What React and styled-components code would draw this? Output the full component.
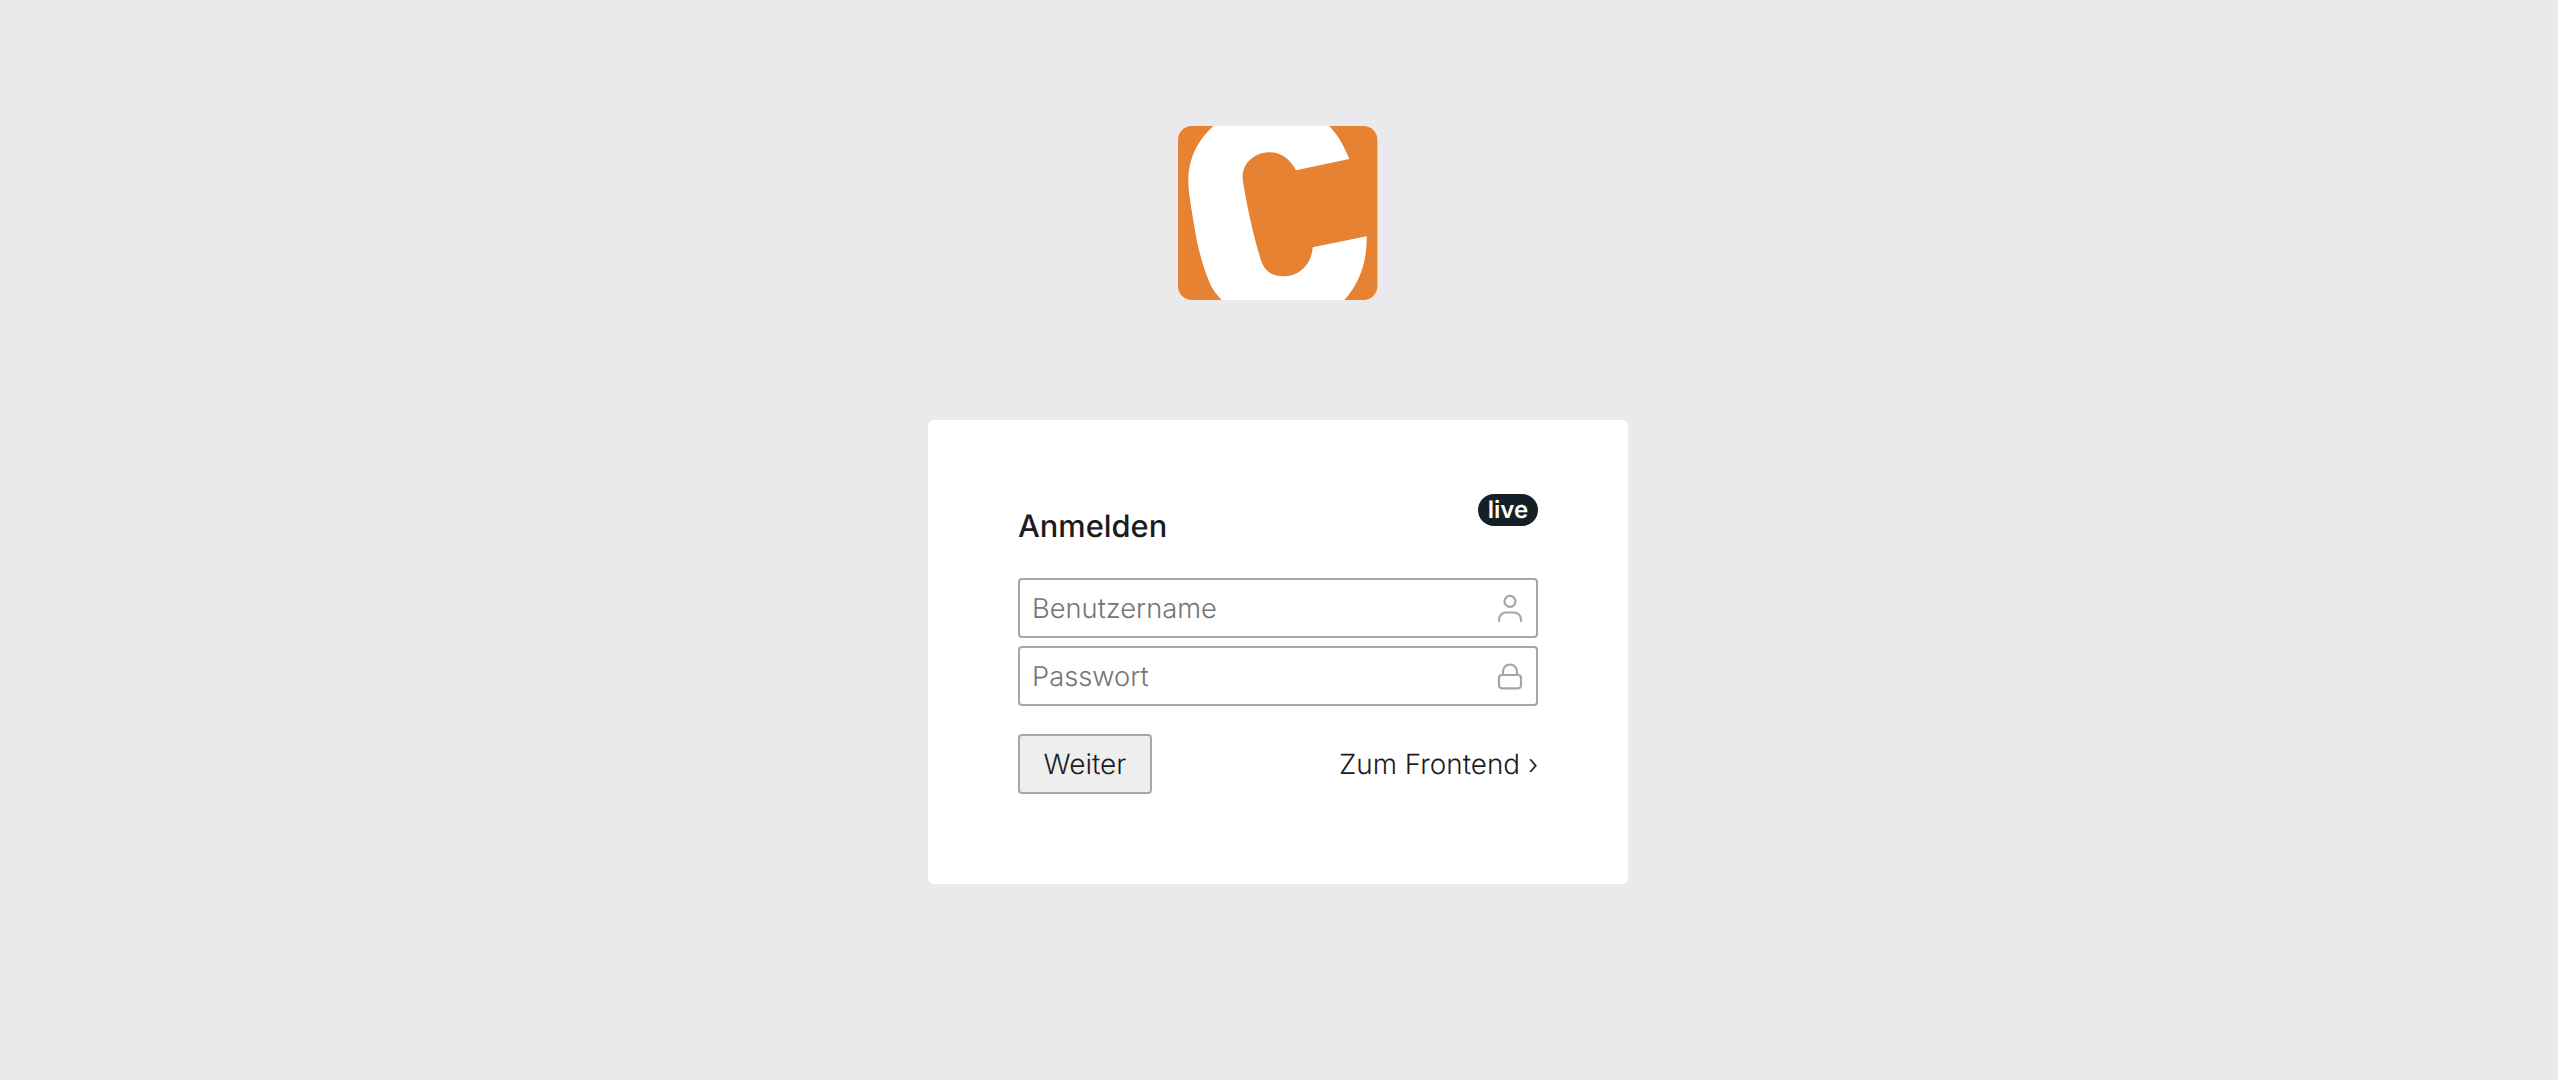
import React from 'react';
import styled, { createGlobalStyle } from 'styled-components';

const Global = createGlobalStyle`
  html, body { margin: 0; padding: 0; background: #eaeaec; }
  body {
    font-family: Inter, "Liberation Sans", sans-serif;
    color: #1c1c1c;
    text-rendering: geometricPrecision;
  }
`;

const Page = styled.main`
  min-height: 1080px;
  box-sizing: border-box;
  padding: 126px 2px 0 0;
  display: flex;
  flex-direction: column;
  align-items: center;
  gap: 120px;
  will-change: opacity;
`;

const LogoMark = styled.svg`
  display: block;
  width: 200px;
  height: 174px;
`;

const Card = styled.form`
  position: relative;
  box-sizing: border-box;
  width: 700px;
  height: 464px;
  padding: 90px;
  background: #fff;
  border-radius: 6px;
`;

const Heading = styled.h1`
  margin: -1px 0 0;
  height: 69px;
  font-size: 30.8px;
  line-height: 36px;
  font-weight: 500;
  color: #1c1c1c;
`;

const Badge = styled.span`
  position: absolute;
  top: 74px;
  right: 90px;
  width: 60px;
  height: 32px;
  border-radius: 16px;
  background: #141f27;
  color: #fff;
  font-size: 24px;
  line-height: 32px;
  font-weight: 600;
  text-align: center;
`;

const Fields = styled.div`
  display: flex;
  flex-direction: column;
  gap: 8px;
`;

const Field = styled.label`
  box-sizing: border-box;
  height: 60px;
  display: flex;
  align-items: center;
  padding: 0 12px;
  border: 2px solid #a6a6a6;
  border-radius: 4px;
  background: #fff;
`;

const Input = styled.input`
  flex: 1;
  min-width: 0;
  border: 0;
  outline: 0;
  padding: 0;
  background: transparent;
  font: 300 27.3px Inter, "Liberation Sans", sans-serif;
  text-rendering: geometricPrecision;
  color: #1c1c1c;
  &::placeholder { color: #757575; opacity: 1; }
`;

const FieldIcon = styled.svg`
  flex: none;
  width: 28px;
  height: 32px;
  fill: none;
  stroke: #a6a6a6;
  stroke-width: 2.2;
  stroke-linecap: round;
`;

const Actions = styled.div`
  margin-top: 28px;
  display: flex;
  align-items: center;
  justify-content: space-between;
`;

const Button = styled.button`
  box-sizing: border-box;
  width: 134px;
  height: 60px;
  padding: 0;
  border: 2px solid #a6a6a6;
  border-radius: 4px;
  background: #eee;
  color: #1c1c1c;
  font: 300 28px Inter, "Liberation Sans", sans-serif;
  text-rendering: geometricPrecision;
`;

const FrontendLink = styled.a`
  color: #1c1c1c;
  font-size: 27.85px;
  font-weight: 300;
  text-decoration: none;
`;

export default function App() {
  return (
    <>
      <Global />
      <Page>
        <LogoMark viewBox="0 0 200 174" aria-label="Contao">
          <rect width="199.4" height="174" rx="14" fill="#e68232" />
          <path
            fill="#fff"
            d="M35.3 0C20 14 10.3 32 10.3 54C10.3 68 15 92 18.7 114C22 130 27 146 32 157.7C35 164 39 169 43.7 174H166.3C181 158 189 137 188.7 110.3L134.7 121.3C133.5 138 122 150.3 105.3 150.3C94 150.3 86 145 82.5 133C75 108 68 76 64.8 54C63 38 76 26.3 92 26.3C103 26.3 112 33 118 44.3L171.3 33C166 20 160 9 151.3 0Z"
          />
        </LogoMark>
        <Card>
          <Heading>Anmelden</Heading>
          <Badge>live</Badge>
          <Fields>
            <Field>
              <Input placeholder="Benutzername" />
              <FieldIcon viewBox="0 0 28 32">
                <circle cx="14" cy="9.3" r="5.5" />
                <path d="M3 29v-1.5a7 7 0 0 1 7-7h8a7 7 0 0 1 7 7V29" />
              </FieldIcon>
            </Field>
            <Field>
              <Input placeholder="Passwort" type="password" />
              <FieldIcon viewBox="0 0 28 32">
                <rect x="3" y="15" width="22" height="13.3" rx="3" />
                <path d="M7 15v-3.5a7 7 0 0 1 14 0V15" />
              </FieldIcon>
            </Field>
          </Fields>
          <Actions>
            <Button type="button">Weiter</Button>
            <FrontendLink href="#">Zum Frontend ›</FrontendLink>
          </Actions>
        </Card>
      </Page>
    </>
  );
}
